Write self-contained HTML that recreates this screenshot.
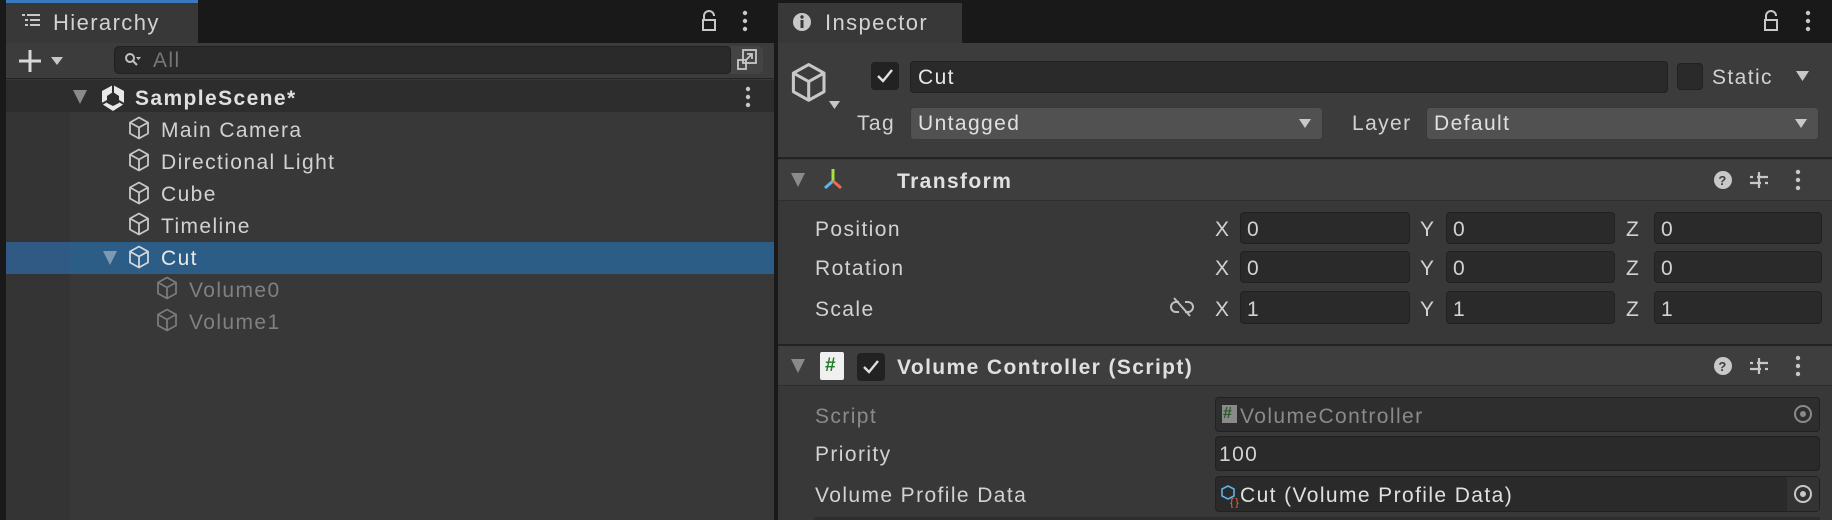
<!DOCTYPE html>
<html><head><meta charset="utf-8"><style>
*{box-sizing:border-box;margin:0;padding:0}
body{width:1832px;height:520px;background:#191919;font-family:"Liberation Sans",sans-serif;color:#d2d2d2;font-size:21px;letter-spacing:1.4px;position:relative;overflow:hidden}
.a{position:absolute}
.t{position:absolute;white-space:nowrap;line-height:1}
.fld{position:absolute;background:#2a2a2a;border:1px solid #212121;border-radius:4px}
.dd{position:absolute;background:#515151;border:1px solid #3a3a3a;border-radius:4px}
.dim{color:#8a8a8a}
</style></head><body>
<div class="a" style="left:0;top:0;width:774px;height:43px;background:#191919"></div>
<div class="a" style="left:6px;top:0;width:192px;height:43px;background:#383838;border-top:3px solid #3a79bb"></div>
<svg class="a" style="left:22px;top:13px" width="20" height="16"><g fill="#c8c8c8"><rect x="0" y="1" width="3" height="2"/><rect x="5" y="1" width="13" height="2"/><rect x="3" y="6" width="3" height="2"/><rect x="8" y="6" width="10" height="2"/><rect x="3" y="11" width="3" height="2"/><rect x="8" y="11" width="10" height="2"/></g></svg>
<div class="t" style="left:53px;top:12px;font-size:22px">Hierarchy</div>
<svg class="a" style="left:700px;top:10px" width="20" height="22"><path d="M4 10V6a5 5 0 0 1 10 0" fill="none" stroke="#c8c8c8" stroke-width="2"/><rect x="3" y="10" width="12" height="10" fill="none" stroke="#c8c8c8" stroke-width="2"/></svg>
<svg class="a" style="left:742px;top:10px" width="6" height="22"><circle cx="3" cy="3" r="2.2" fill="#c8c8c8"/><circle cx="3" cy="11" r="2.2" fill="#c8c8c8"/><circle cx="3" cy="19" r="2.2" fill="#c8c8c8"/></svg>
<div class="a" style="left:6px;top:43px;width:768px;height:477px;background:#383838"></div>
<div class="a" style="left:6px;top:43px;width:768px;height:36px;background:#3c3c3c;border-bottom:1px solid #232323"></div>
<svg class="a" style="left:17px;top:48px" width="50" height="26"><path d="M13 2v22M2 13h22" stroke="#d8d8d8" stroke-width="3"/><path d="M34 9h12l-6 8z" fill="#c8c8c8"/></svg>
<div class="a" style="left:114px;top:46px;width:617px;height:28px;background:#2a2a2a;border:1px solid #202020;border-radius:5px"></div>
<svg class="a" style="left:124px;top:52px" width="18" height="16"><circle cx="6" cy="6" r="4" fill="none" stroke="#c0c0c0" stroke-width="2"/><path d="M9 9l4 4" stroke="#c0c0c0" stroke-width="2"/><path d="M12 5h5l-2.5 3z" fill="#c0c0c0"/></svg>
<div class="t dim" style="left:153px;top:50px;font-size:21px;color:#777">All</div>
<div class="a" style="left:731px;top:46px;width:32px;height:28px;background:#444;border-radius:0 5px 5px 0"></div>
<svg class="a" style="left:735px;top:48px" width="24" height="24"><rect x="8" y="2" width="13" height="13" fill="none" stroke="#c8c8c8" stroke-width="1.8"/><rect x="3" y="12" width="8" height="9" fill="none" stroke="#c8c8c8" stroke-width="1.8"/><path d="M10 13l7-7M12 6h5v5" fill="none" stroke="#c8c8c8" stroke-width="1.8"/></svg>
<div class="a" style="left:6px;top:80px;width:768px;height:32px;background:#2d2d2d"></div>
<div class="a" style="left:6px;top:112px;width:64px;height:408px;background:#343434"></div>
<svg class="a" style="left:72px;top:89px" width="16" height="16"><path d="M1 1h14l-7 14z" fill="#8a8a8a"/></svg>
<svg class="a" style="left:100px;top:84px" width="26" height="28"><path d="M13 1l11 6v13l-11 7-11-7V7z" fill="#e8e8e8"/><path d="M13 8l6 4v7l-6 3-6-3v-7z" fill="#2d2d2d"/><path d="M13 1v9M2 20l7-4M24 20l-7-4" stroke="#2d2d2d" stroke-width="2"/></svg>
<div class="t" style="left:135px;top:88px;font-weight:bold;color:#e0e0e0">SampleScene*</div>
<svg class="a" style="left:745px;top:86px" width="6" height="22"><circle cx="3" cy="3" r="2.2" fill="#c8c8c8"/><circle cx="3" cy="11" r="2.2" fill="#c8c8c8"/><circle cx="3" cy="19" r="2.2" fill="#c8c8c8"/></svg>
<div class="a" style="left:6px;top:242px;width:768px;height:32px;background:#2c5d87"></div>
<div class="a" style="left:6px;top:242px;width:64px;height:32px;background:#305a83"></div>
<svg class="a" style="left:102px;top:250px" width="16" height="16"><path d="M1 1h14l-7 14z" fill="#7d9ab5"/></svg>
<svg width="0" height="0" style="position:absolute"><defs><g id="cube"><path d="M11 1.5l9 5v11l-9 5-9-5v-11z M2 6.5l9 5 9-5 M11 11.5v11" fill="none" stroke="currentColor" stroke-width="1.8" stroke-linejoin="round"/></g></defs></svg>
<svg class="a" style="left:128px;top:116px;color:#c8c8c8" width="22" height="25"><use href="#cube"/></svg>
<div class="t" style="left:161px;top:120px">Main Camera</div>
<svg class="a" style="left:128px;top:148px;color:#c8c8c8" width="22" height="25"><use href="#cube"/></svg>
<div class="t" style="left:161px;top:152px">Directional Light</div>
<svg class="a" style="left:128px;top:181px;color:#c8c8c8" width="22" height="25"><use href="#cube"/></svg>
<div class="t" style="left:161px;top:184px">Cube</div>
<svg class="a" style="left:128px;top:212px;color:#c8c8c8" width="22" height="25"><use href="#cube"/></svg>
<div class="t" style="left:161px;top:216px">Timeline</div>
<svg class="a" style="left:128px;top:245px;color:#d0d8e0" width="22" height="25"><use href="#cube"/></svg>
<div class="t" style="left:161px;top:248px;color:#e8e8e8">Cut</div>
<svg class="a" style="left:156px;top:276px;color:#7a7a7a" width="22" height="25"><use href="#cube"/></svg>
<div class="t" style="left:189px;top:280px;color:#808080">Volume0</div>
<svg class="a" style="left:156px;top:308px;color:#7a7a7a" width="22" height="25"><use href="#cube"/></svg>
<div class="t" style="left:189px;top:312px;color:#808080">Volume1</div>
<div class="a" style="left:774px;top:0;width:4px;height:520px;background:#191919"></div>
<div class="a" style="left:778px;top:43px;width:1054px;height:477px;background:#383838"></div>
<div class="a" style="left:778px;top:3px;width:184px;height:40px;background:#383838"></div>
<svg class="a" style="left:792px;top:12px" width="20" height="20"><circle cx="10" cy="10" r="9" fill="#c8c8c8"/><rect x="8.5" y="8" width="3" height="8" fill="#383838"/><circle cx="10" cy="5" r="1.7" fill="#383838"/></svg>
<div class="t" style="left:825px;top:12px;font-size:22px">Inspector</div>
<svg class="a" style="left:1762px;top:10px" width="20" height="22"><path d="M4 10V6a5 5 0 0 1 10 0" fill="none" stroke="#c8c8c8" stroke-width="2"/><rect x="3" y="10" width="12" height="10" fill="none" stroke="#c8c8c8" stroke-width="2"/></svg>
<svg class="a" style="left:1805px;top:10px" width="6" height="22"><circle cx="3" cy="3" r="2.2" fill="#c8c8c8"/><circle cx="3" cy="11" r="2.2" fill="#c8c8c8"/><circle cx="3" cy="19" r="2.2" fill="#c8c8c8"/></svg>
<div class="a" style="left:778px;top:43px;width:1054px;height:116px;background:#3c3c3c;border-bottom:2px solid #232323"></div>
<svg class="a" style="left:790px;top:62px;color:#c8c8c8" width="44" height="48"><g transform="scale(1.7)"><use href="#cube"/></g></svg>
<svg class="a" style="left:828px;top:100px" width="14" height="10"><path d="M1 1h11l-5.5 8z" fill="#c8c8c8"/></svg>
<div class="fld" style="left:871px;top:62px;width:28px;height:28px;background:#222"></div>
<svg class="a" style="left:876px;top:68px" width="18" height="16"><path d="M2 8l5 5 9-11" fill="none" stroke="#e0e0e0" stroke-width="2.4"/></svg>
<div class="fld" style="left:910px;top:61px;width:758px;height:32px"></div>
<div class="t" style="left:918px;top:67px;color:#e8e8e8">Cut</div>
<div class="fld" style="left:1677px;top:63px;width:26px;height:27px;background:#2a2a2a"></div>
<div class="t" style="left:1712px;top:67px">Static</div>
<svg class="a" style="left:1795px;top:70px" width="16" height="14"><path d="M1 1h13l-6.5 10z" fill="#c8c8c8"/></svg>
<div class="t" style="left:857px;top:113px">Tag</div>
<div class="dd" style="left:910px;top:107px;width:413px;height:33px"></div>
<div class="t" style="left:918px;top:113px;color:#e0e0e0">Untagged</div>
<svg class="a" style="left:1298px;top:118px" width="14" height="12"><path d="M1 1h12l-6 9z" fill="#c8c8c8"/></svg>
<div class="t" style="left:1352px;top:113px">Layer</div>
<div class="dd" style="left:1426px;top:107px;width:393px;height:33px"></div>
<div class="t" style="left:1434px;top:113px;color:#e0e0e0">Default</div>
<svg class="a" style="left:1794px;top:118px" width="14" height="12"><path d="M1 1h12l-6 9z" fill="#c8c8c8"/></svg>
<div class="a" style="left:778px;top:160px;width:1054px;height:41px;background:#3e3e3e;border-bottom:1px solid #2e2e2e"></div>
<svg class="a" style="left:790px;top:172px" width="16" height="16"><path d="M1 1h14l-7 14z" fill="#8a8a8a"/></svg>
<svg class="a" style="left:820px;top:167px" width="26" height="28"><path d="M13 2v12" stroke="#a6e23a" stroke-width="3"/><path d="M13 14l-8 7" stroke="#5eb4ee" stroke-width="3"/><path d="M13 14l8 7" stroke="#ee6a4a" stroke-width="3"/></svg>
<div class="t" style="left:897px;top:171px;font-weight:bold;color:#e0e0e0">Transform</div>
<svg width="0" height="0" style="position:absolute"><defs>
<g id="hdr"><circle cx="10" cy="11" r="9" fill="#c8c8c8"/><text x="10" y="16" font-size="13" font-weight="bold" text-anchor="middle" fill="#3e3e3e" font-family="Liberation Sans">?</text>
<path d="M46 3v16M37 8h18M37 14h18" stroke="#c8c8c8" stroke-width="2.2"/><rect x="40" y="6" width="4" height="4" fill="#3e3e3e"/><rect x="48" y="12" width="4" height="4" fill="#3e3e3e"/>
<circle cx="85" cy="3" r="2.2" fill="#c8c8c8"/><circle cx="85" cy="11" r="2.2" fill="#c8c8c8"/><circle cx="85" cy="19" r="2.2" fill="#c8c8c8"/></g></defs></svg>
<svg class="a" style="left:1713px;top:169px" width="92" height="24"><use href="#hdr"/></svg>
<div class="t" style="left:815px;top:219px">Position</div>
<div class="t" style="left:815px;top:258px">Rotation</div>
<div class="t" style="left:815px;top:299px">Scale</div>
<svg class="a" style="left:1170px;top:296px" width="24" height="22"><path d="M9 6H6a5 5 0 0 0 0 10h3M15 6h3a5 5 0 0 1 0 10h-3" fill="none" stroke="#c0c0c0" stroke-width="2"/><path d="M4 2l16 18" stroke="#c0c0c0" stroke-width="2"/></svg>
<div class="t" style="left:1215px;top:219px">X</div><div class="fld" style="left:1240px;top:212px;width:170px;height:32px"></div><div class="t" style="left:1247px;top:219px">0</div>
<div class="t" style="left:1420px;top:219px">Y</div><div class="fld" style="left:1446px;top:212px;width:169px;height:32px"></div><div class="t" style="left:1453px;top:219px">0</div>
<div class="t" style="left:1626px;top:219px">Z</div><div class="fld" style="left:1654px;top:212px;width:168px;height:32px"></div><div class="t" style="left:1661px;top:219px">0</div>
<div class="t" style="left:1215px;top:258px">X</div><div class="fld" style="left:1240px;top:251px;width:170px;height:32px"></div><div class="t" style="left:1247px;top:258px">0</div>
<div class="t" style="left:1420px;top:258px">Y</div><div class="fld" style="left:1446px;top:251px;width:169px;height:32px"></div><div class="t" style="left:1453px;top:258px">0</div>
<div class="t" style="left:1626px;top:258px">Z</div><div class="fld" style="left:1654px;top:251px;width:168px;height:32px"></div><div class="t" style="left:1661px;top:258px">0</div>
<div class="t" style="left:1215px;top:299px">X</div><div class="fld" style="left:1240px;top:291px;width:170px;height:33px"></div><div class="t" style="left:1247px;top:299px">1</div>
<div class="t" style="left:1420px;top:299px">Y</div><div class="fld" style="left:1446px;top:291px;width:169px;height:33px"></div><div class="t" style="left:1453px;top:299px">1</div>
<div class="t" style="left:1626px;top:299px">Z</div><div class="fld" style="left:1654px;top:291px;width:168px;height:33px"></div><div class="t" style="left:1661px;top:299px">1</div>
<div class="a" style="left:778px;top:344px;width:1054px;height:2px;background:#232323"></div>
<div class="a" style="left:778px;top:346px;width:1054px;height:40px;background:#3e3e3e;border-bottom:1px solid #2e2e2e"></div>
<svg class="a" style="left:790px;top:358px" width="16" height="16"><path d="M1 1h14l-7 14z" fill="#8a8a8a"/></svg>
<div class="a" style="left:820px;top:352px;width:24px;height:28px;background:#f0f0f0;border-radius:2px"></div>
<div class="t" style="left:825px;top:356px;color:#1f7a2a;font-weight:bold;font-size:19px;letter-spacing:0">#</div>
<div class="fld" style="left:857px;top:353px;width:28px;height:28px;background:#222"></div>
<svg class="a" style="left:862px;top:359px" width="18" height="16"><path d="M2 8l5 5 9-11" fill="none" stroke="#e0e0e0" stroke-width="2.4"/></svg>
<div class="t" style="left:897px;top:357px;font-weight:bold;color:#e0e0e0">Volume Controller (Script)</div>
<svg class="a" style="left:1713px;top:355px" width="92" height="24"><use href="#hdr"/></svg>
<div class="t" style="left:815px;top:406px;color:#8a8a8a">Script</div>
<div class="fld" style="left:1215px;top:397px;width:605px;height:35px;background:#2e2e2e"></div>
<div class="a" style="left:1222px;top:405px;width:15px;height:18px;background:#8a8a8a"></div>
<div class="t" style="left:1223px;top:406px;color:#2a5a2a;font-size:16px;font-weight:bold;letter-spacing:0">#</div>
<div class="t" style="left:1240px;top:406px;color:#8a8a8a">VolumeController</div>
<svg class="a" style="left:1793px;top:404px" width="20" height="20"><circle cx="10" cy="10" r="8" fill="none" stroke="#8a8a8a" stroke-width="2"/><circle cx="10" cy="10" r="3" fill="#8a8a8a"/></svg>
<div class="t" style="left:815px;top:444px">Priority</div>
<div class="fld" style="left:1215px;top:436px;width:605px;height:35px"></div>
<div class="t" style="left:1219px;top:444px">100</div>
<div class="t" style="left:815px;top:485px">Volume Profile Data</div>
<div class="fld" style="left:1215px;top:476px;width:605px;height:36px"></div>
<svg class="a" style="left:1220px;top:484px" width="20" height="24"><path d="M8 2l6 3v7l-6 3-6-3V5z" fill="none" stroke="#5eb4ee" stroke-width="1.6"/><text x="10" y="22" font-size="11" fill="#ee6a4a" font-family="Liberation Sans">{}</text></svg>
<div class="t" style="left:1240px;top:485px;color:#e0e0e0">Cut (Volume Profile Data)</div>
<div class="a" style="left:1787px;top:477px;width:32px;height:34px;background:#333"></div>
<svg class="a" style="left:1793px;top:484px" width="20" height="20"><circle cx="10" cy="10" r="8" fill="none" stroke="#c8c8c8" stroke-width="2"/><circle cx="10" cy="10" r="3" fill="#c8c8c8"/></svg>
<div class="a" style="left:814px;top:517px;width:1006px;height:3px;background:#2e2e2e"></div>
</body></html>
